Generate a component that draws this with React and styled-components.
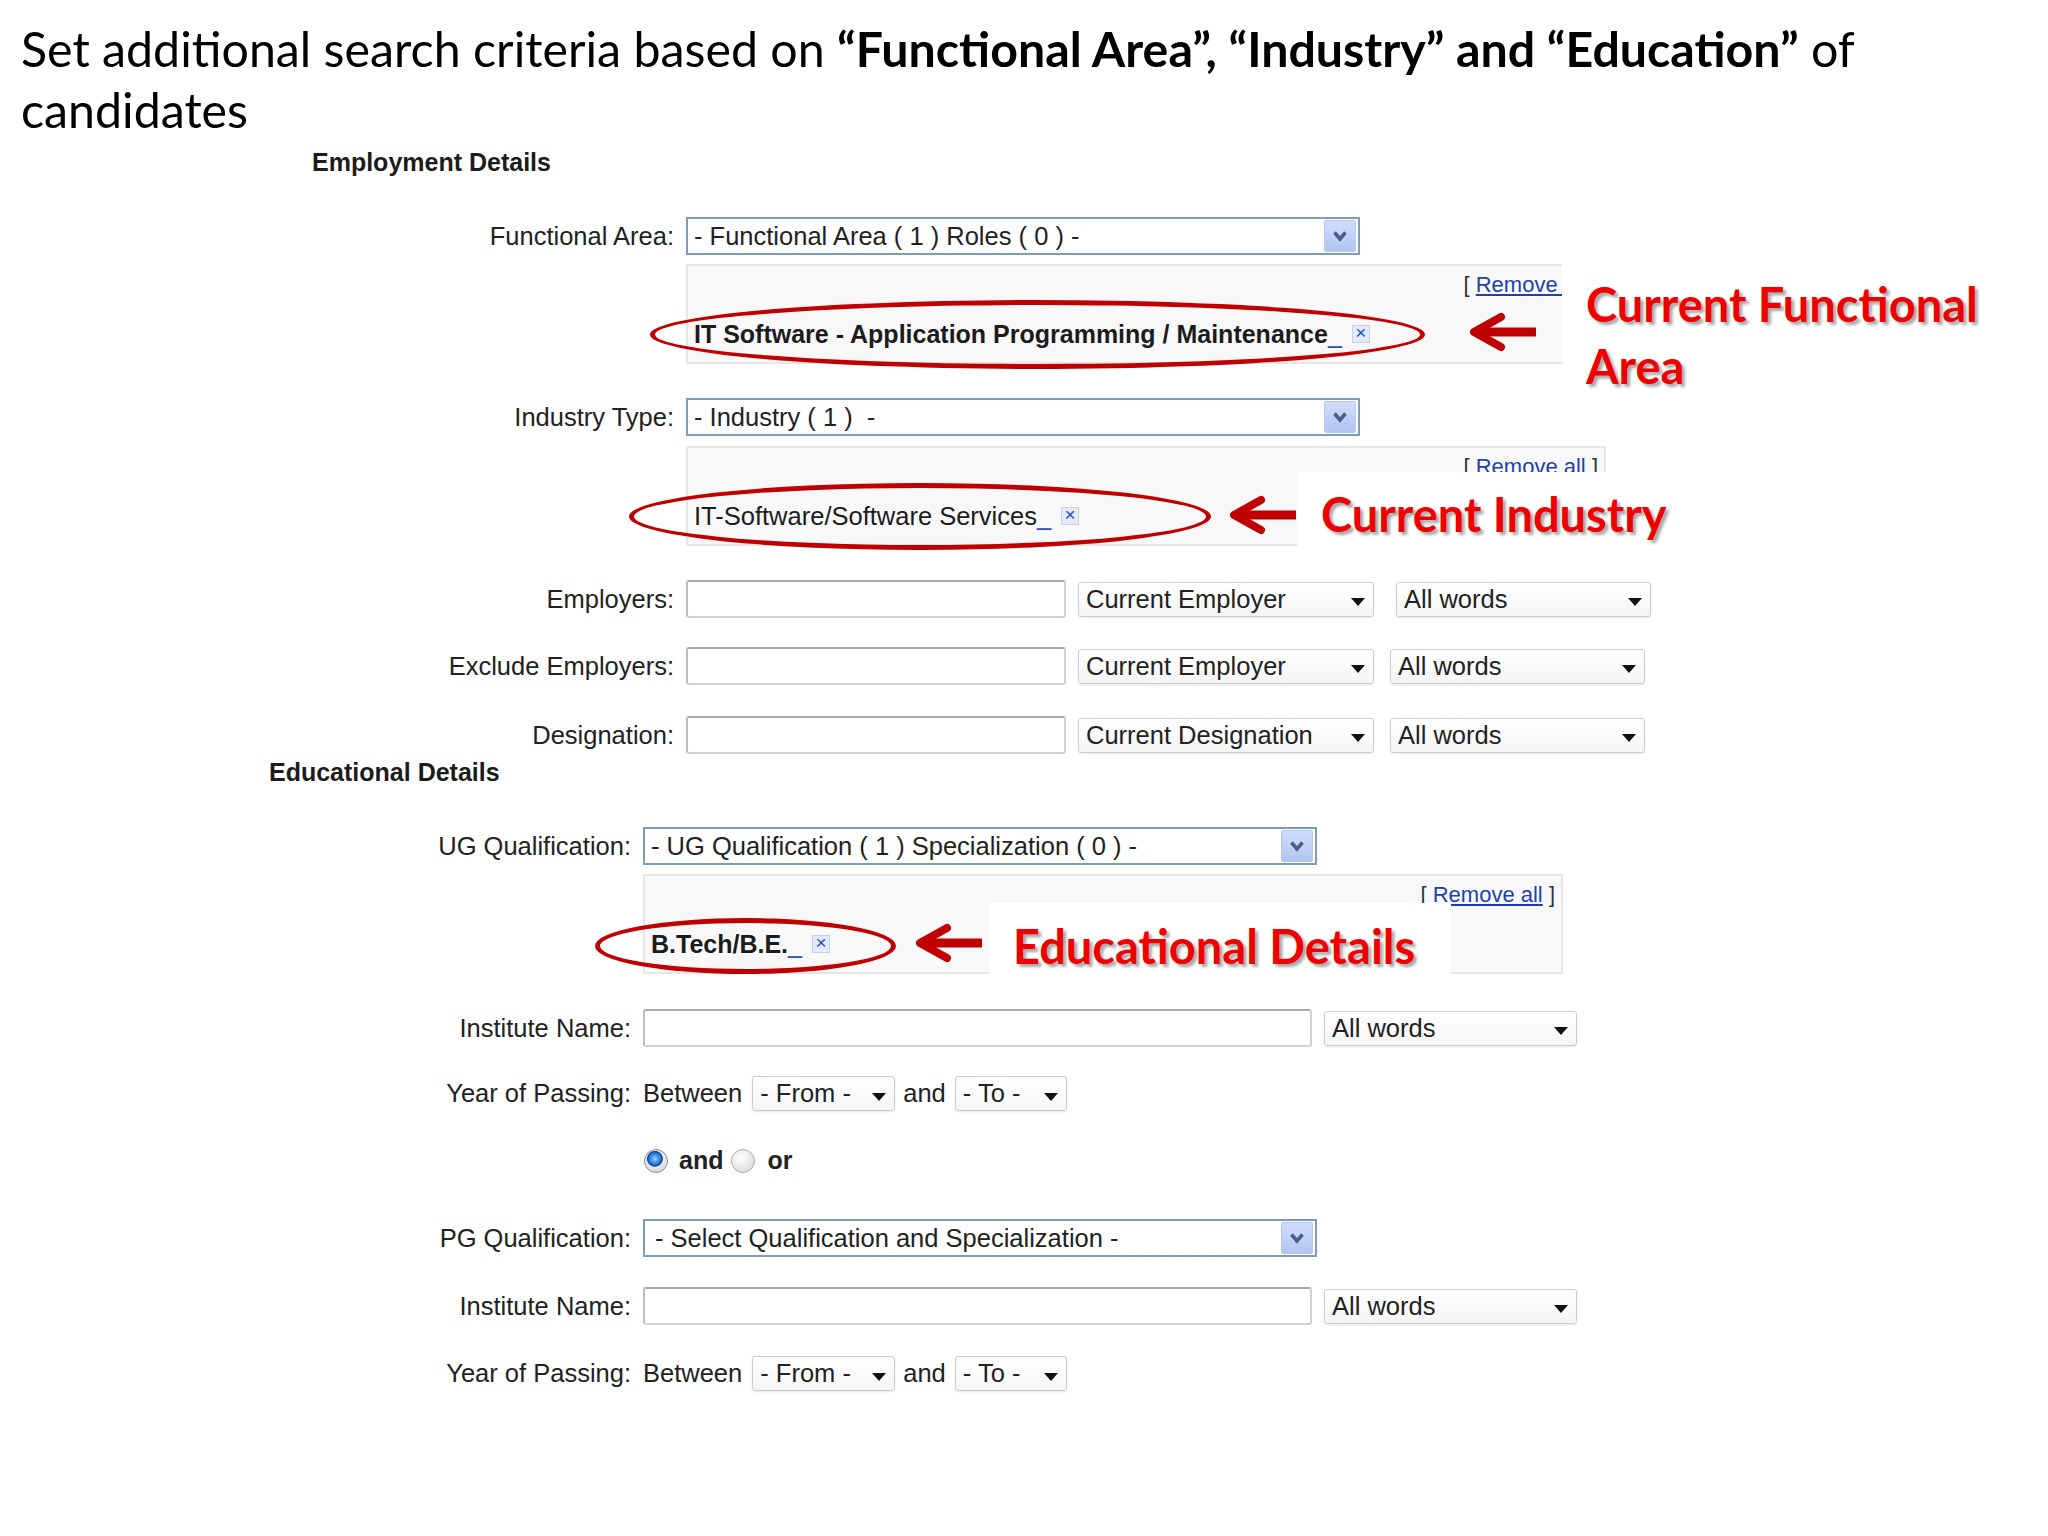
import styled, { createGlobalStyle } from "styled-components";

const GlobalStyle = createGlobalStyle`
  body {
    margin: 0;
    background: #ffffff;
    font-family: "Liberation Sans", Arial, sans-serif;
    color: #222222;
  }
`;

const Page = styled.div`
  width: 2048px;
  min-height: 1536px;
  background: #ffffff;
  overflow: hidden;
`;

const Title = styled.h1`
  margin: 0;
  padding: 18px 0 0 21px;
  font-family: Lato, "Open Sans", sans-serif;
  font-weight: 400;
  font-size: 48.3px;
  line-height: 61px;
  color: #000000;
  white-space: nowrap;

  b {
    font-weight: 700;
  }
`;

const Section = styled.section`
  margin-left: ${(p) => p.$left}px;
  margin-top: ${(p) => p.$mt}px;
`;

const Heading = styled.h2`
  margin: 0;
  font-size: 25px;
  line-height: 28px;
  font-weight: 700;
  color: #1c1c1c;
`;

const Row = styled.div`
  display: grid;
  grid-template-columns: 362px auto;
  column-gap: 12px;
  align-items: center;
  justify-content: start;
  margin-top: ${(p) => p.$mt}px;
`;

const Label = styled.span`
  text-align: right;
  font-size: 25.5px;
  white-space: nowrap;
  color: #222222;
`;

const Controls = styled.div`
  display: flex;
  align-items: center;
`;

const BigSelect = styled.div`
  width: 674px;
  height: 38px;
  box-sizing: border-box;
  border: 2px solid #7f9db9;
  background: #ffffff;
  display: flex;
  align-items: center;
  justify-content: space-between;
  padding: 0 2px 0 ${(p) => p.$pad || 6}px;
  font-size: 25.5px;
  white-space: pre;
`;

const ChevronBtn = styled.span`
  width: 32px;
  height: 32px;
  box-sizing: border-box;
  border: 1px solid #b6c8f2;
  border-radius: 2px;
  background: linear-gradient(#d0ddfc, #b2c5f1);
  display: flex;
  align-items: center;
  justify-content: center;
`;

const TextInput = styled.input`
  width: ${(p) => p.$w}px;
  height: 38px;
  box-sizing: border-box;
  border: 2px solid #d0d0d0;
  border-top-color: #a9a9a9;
  border-left-color: #bdbdbd;
  border-radius: 3px;
  background: #ffffff;
  margin: 0;
`;

const SmallSelect = styled.div`
  position: relative;
  width: ${(p) => p.$w}px;
  height: 35px;
  box-sizing: border-box;
  margin-left: ${(p) => p.$ml || 0}px;
  border: 1px solid #cdcdcd;
  border-radius: 3px;
  box-shadow: 0 1px 2px rgba(0, 0, 0, 0.1);
  background: linear-gradient(#ffffff, #f5f5f5);
  padding-left: 7px;
  display: flex;
  align-items: center;
  font-size: 25.5px;
  white-space: pre;

  &::after {
    content: "";
    position: absolute;
    right: 8px;
    top: 50%;
    margin-top: -1px;
    border-left: 7px solid transparent;
    border-right: 7px solid transparent;
    border-top: 8px solid #111111;
  }
`;

const Word = styled.span`
  margin-left: ${(p) => p.$ml || 0}px;
  font-size: ${(p) => (p.$bold ? 25 : 25.5)}px;
  font-weight: ${(p) => (p.$bold ? 700 : 400)};
  color: #222222;
`;

const Radio = styled.span`
  width: 24px;
  height: 24px;
  box-sizing: border-box;
  margin-left: ${(p) => p.$ml || 0}px;
  border-radius: 50%;
  border: 1px solid ${(p) => (p.$checked ? "#8b8b8b" : "#a9a9a9")};
  background: ${(p) =>
    p.$checked
      ? "radial-gradient(circle at 45% 40%, #9fd0ff 0, #2f7fd8 28%, #0e4a9e 42%, #e9e9e9 46%, #cfcfcf 100%)"
      : "radial-gradient(circle at 40% 35%, #ffffff 0, #ececec 45%, #cfcfcf 100%)"};
`;

const Panel = styled.div`
  position: relative;
  width: 920px;
  height: 100px;
  box-sizing: border-box;
  border: 2px solid #e6e6e6;
  background: #f8f8f8;
`;

const RemoveBar = styled.div`
  display: flex;
  justify-content: flex-end;
  padding: 6px 6px 0 0;
  font-size: 22px;
  line-height: 26px;
  color: #333333;
  white-space: pre;

  a {
    color: #1f3fae;
    text-decoration: underline;
  }
`;

const Item = styled.div`
  display: flex;
  align-items: center;
  height: 30px;
  margin-top: 21px;
  padding-left: 6px;
  font-size: ${(p) => (p.$bold ? 25 : 25.5)}px;
  font-weight: ${(p) => (p.$bold ? 700 : 400)};
  color: #1c1c1c;
  white-space: nowrap;
`;

const Under = styled.span`
  color: #2d4fb8;
  font-weight: 400;
`;

const XBox = styled.span`
  margin-left: 10px;
  width: 18px;
  height: 18px;
  box-sizing: border-box;
  border: 1px solid #c4d1ee;
  background: #e3eaf9;
  color: #2a4cc8;
  font-size: 19px;
  line-height: 14px;
  font-weight: 400;
  text-align: center;
`;

const Ellipse = styled.span`
  position: absolute;
  left: ${(p) => p.$x}px;
  top: ${(p) => p.$y}px;
  width: ${(p) => p.$w}px;
  height: ${(p) => p.$h}px;
  box-sizing: border-box;
  border: 5px solid #c00000;
  border-radius: 50%;
  pointer-events: none;
`;

const ArrowWrap = styled.span`
  position: absolute;
  left: ${(p) => p.$x}px;
  top: ${(p) => p.$y}px;
  width: 68px;
  height: 40px;
  display: flex;
`;

const CalloutBox = styled.div`
  position: absolute;
  left: ${(p) => p.$x}px;
  top: ${(p) => p.$y}px;
  width: ${(p) => p.$w}px;
  min-height: 82px;
  box-sizing: border-box;
  padding: ${(p) => p.$pt}px 0 0 24px;
  background: #ffffff;
  font-family: Lato, "Open Sans", sans-serif;
  font-weight: 700;
  font-size: 47px;
  line-height: 62px;
  color: #ee0000;
  text-shadow: 3px 3px 3px rgba(0, 0, 0, 0.35);
  white-space: nowrap;
`;

const Chevron = () => (
  <svg width="16" height="12" viewBox="0 0 16 12">
    <path
      d="M2.5 2.5 L8 9 L13.5 2.5"
      fill="none"
      stroke="#4a5e86"
      strokeWidth="3.5"
      strokeLinejoin="miter"
    />
  </svg>
);

const Arrow = ({ x, y }) => (
  <ArrowWrap $x={x} $y={y}>
    <svg width="68" height="40" viewBox="0 0 68 40">
      <path d="M12 20 H68" stroke="#c00000" strokeWidth="9" />
      <polyline
        points="33,5 6,20 33,35"
        fill="none"
        stroke="#c00000"
        strokeWidth="8"
        strokeLinecap="round"
        strokeLinejoin="round"
      />
    </svg>
  </ArrowWrap>
);

const Remove = () => (
  <RemoveBar>
    [ <a>Remove all</a> ]
  </RemoveBar>
);

const Select = ({ children, pad }) => (
  <BigSelect $pad={pad}>
    <span>{children}</span>
    <ChevronBtn>
      <Chevron />
    </ChevronBtn>
  </BigSelect>
);

const YearRow = ({ mt }) => (
  <Row $mt={mt}>
    <Label>Year of Passing:</Label>
    <Controls>
      <Word>Between</Word>
      <SmallSelect $w={143} $ml={10}>- From -</SmallSelect>
      <Word $ml={8}>and</Word>
      <SmallSelect $w={112} $ml={9}>- To -</SmallSelect>
    </Controls>
  </Row>
);

const App = () => {
  return (
    <Page>
      <GlobalStyle />
      <Title>
        Set additional search criteria based on{" "}
        <b>“Functional Area”, “Industry” and “Education”</b> of
        <br />
        candidates
      </Title>

      <Section $left={312} $mt={8}>
        <Heading>Employment Details</Heading>

        <Row $mt={41}>
          <Label>Functional Area:</Label>
          <Controls>
            <Select>- Functional Area ( 1 ) Roles ( 0 ) -</Select>
          </Controls>
        </Row>

        <Row $mt={9}>
          <span />
          <Panel>
            <Remove />
            <Item $bold>
              IT Software - Application Programming / Maintenance
              <Under>_</Under>
              <XBox>×</XBox>
            </Item>
            <Ellipse $x={-38} $y={34} $w={775} $h={69} />
            <Arrow x={780} y={46} />
            <CalloutBox $x={874} $y={-4} $w={470} $pt={11}>
              Current Functional
              <br />
              Area
            </CalloutBox>
          </Panel>
        </Row>

        <Row $mt={34}>
          <Label>Industry Type:</Label>
          <Controls>
            <Select>- Industry ( 1 )  -</Select>
          </Controls>
        </Row>

        <Row $mt={10}>
          <span />
          <Panel>
            <Remove />
            <Item>
              IT-Software/Software Services
              <Under>_</Under>
              <XBox>×</XBox>
            </Item>
            <Ellipse $x={-59} $y={35} $w={582} $h={67} />
            <Arrow x={540} y={47} />
            <CalloutBox $x={609} $y={24} $w={405} $pt={11}>
              Current Industry
            </CalloutBox>
          </Panel>
        </Row>

        <Row $mt={34}>
          <Label>Employers:</Label>
          <Controls>
            <TextInput $w={380} readOnly />
            <SmallSelect $w={296} $ml={12}>Current Employer</SmallSelect>
            <SmallSelect $w={255} $ml={22}>All words</SmallSelect>
          </Controls>
        </Row>

        <Row $mt={29}>
          <Label>Exclude Employers:</Label>
          <Controls>
            <TextInput $w={380} readOnly />
            <SmallSelect $w={296} $ml={12}>Current Employer</SmallSelect>
            <SmallSelect $w={255} $ml={16}>All words</SmallSelect>
          </Controls>
        </Row>

        <Row $mt={31}>
          <Label>Designation:</Label>
          <Controls>
            <TextInput $w={380} readOnly />
            <SmallSelect $w={296} $ml={12}>Current Designation</SmallSelect>
            <SmallSelect $w={255} $ml={16}>All words</SmallSelect>
          </Controls>
        </Row>
      </Section>

      <Section $left={269} $mt={4}>
        <Heading>Educational Details</Heading>

        <Row $mt={41}>
          <Label>UG Qualification:</Label>
          <Controls>
            <Select>- UG Qualification ( 1 ) Specialization ( 0 ) -</Select>
          </Controls>
        </Row>

        <Row $mt={9}>
          <span />
          <Panel>
            <Remove />
            <Item $bold>
              B.Tech/B.E.
              <Under>_</Under>
              <XBox>×</XBox>
            </Item>
            <Ellipse $x={-50} $y={42} $w={301} $h={56} />
            <Arrow x={269} y={47} />
            <CalloutBox $x={344} $y={27} $w={462} $pt={12}>
              Educational Details
            </CalloutBox>
          </Panel>
        </Row>

        <Row $mt={35}>
          <Label>Institute Name:</Label>
          <Controls>
            <TextInput $w={669} readOnly />
            <SmallSelect $w={253} $ml={12}>All words</SmallSelect>
          </Controls>
        </Row>

        <YearRow mt={29} />

        <Row $mt={35}>
          <span />
          <Controls>
            <Radio $checked $ml={1} />
            <Word $bold $ml={11}>and</Word>
            <Radio $ml={8} />
            <Word $bold $ml={12}>or</Word>
          </Controls>
        </Row>

        <Row $mt={44}>
          <Label>PG Qualification:</Label>
          <Controls>
            <Select pad={10}>- Select Qualification and Specialization -</Select>
          </Controls>
        </Row>

        <Row $mt={30}>
          <Label>Institute Name:</Label>
          <Controls>
            <TextInput $w={669} readOnly />
            <SmallSelect $w={253} $ml={12}>All words</SmallSelect>
          </Controls>
        </Row>

        <YearRow mt={31} />
      </Section>
    </Page>
  );
};

export default App;
